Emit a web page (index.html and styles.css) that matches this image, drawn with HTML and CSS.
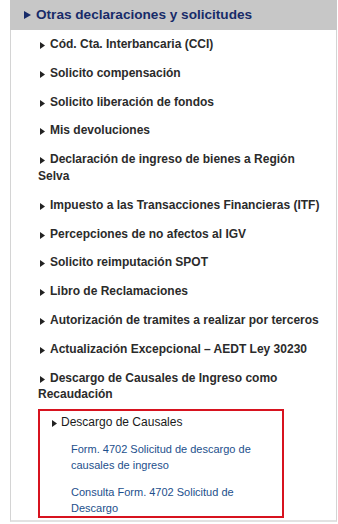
FILE: index.html
```html
<!DOCTYPE html>
<html lang="es">
<head>
<meta charset="utf-8">
<title>Otras declaraciones y solicitudes</title>
<link rel="stylesheet" href="styles.css">
</head>
<body>
<div class="menu">
  <div class="menu-header">
    <svg class="tri-h" width="7" height="8" viewBox="0 0 7 8"><polygon points="0,0 7,4 0,8" /></svg>Otras declaraciones y solicitudes
  </div>
  <ul class="menu-body">
    <li class="item"><svg class="tri" width="5" height="7" viewBox="0 0 5 7"><polygon points="0,0 5,3.5 0,7"/></svg>Cód. Cta. Interbancaria (CCI)</li>
    <li class="item"><svg class="tri" width="5" height="7" viewBox="0 0 5 7"><polygon points="0,0 5,3.5 0,7"/></svg>Solicito compensación</li>
    <li class="item"><svg class="tri" width="5" height="7" viewBox="0 0 5 7"><polygon points="0,0 5,3.5 0,7"/></svg>Solicito liberación de fondos</li>
    <li class="item"><svg class="tri" width="5" height="7" viewBox="0 0 5 7"><polygon points="0,0 5,3.5 0,7"/></svg>Mis devoluciones</li>
    <li class="item"><svg class="tri" width="5" height="7" viewBox="0 0 5 7"><polygon points="0,0 5,3.5 0,7"/></svg>Declaración de ingreso de bienes a Región Selva</li>
    <li class="item"><svg class="tri" width="5" height="7" viewBox="0 0 5 7"><polygon points="0,0 5,3.5 0,7"/></svg>Impuesto a las Transacciones Financieras (ITF)</li>
    <li class="item"><svg class="tri" width="5" height="7" viewBox="0 0 5 7"><polygon points="0,0 5,3.5 0,7"/></svg>Percepciones de no afectos al IGV</li>
    <li class="item"><svg class="tri" width="5" height="7" viewBox="0 0 5 7"><polygon points="0,0 5,3.5 0,7"/></svg>Solicito reimputación SPOT</li>
    <li class="item"><svg class="tri" width="5" height="7" viewBox="0 0 5 7"><polygon points="0,0 5,3.5 0,7"/></svg>Libro de Reclamaciones</li>
    <li class="item"><svg class="tri" width="5" height="7" viewBox="0 0 5 7"><polygon points="0,0 5,3.5 0,7"/></svg>Autorización de tramites a realizar por terceros</li>
    <li class="item"><svg class="tri" width="5" height="7" viewBox="0 0 5 7"><polygon points="0,0 5,3.5 0,7"/></svg>Actualización Excepcional – AEDT Ley 30230</li>
    <li class="item"><svg class="tri" width="5" height="7" viewBox="0 0 5 7"><polygon points="0,0 5,3.5 0,7"/></svg>Descargo de Causales de Ingreso como Recaudación</li>
    <li class="highlight">
      <div class="sub-title"><svg class="tri" width="5" height="7" viewBox="0 0 5 7"><polygon points="0,0 5,3.5 0,7"/></svg>Descargo de Causales</div>
      <ul class="sub-links">
        <li><a href="#">Form. 4702 Solicitud de descargo de causales de ingreso</a></li>
        <li><a href="#">Consulta Form. 4702 Solicitud de Descargo</a></li>
      </ul>
    </li>
  </ul>
</div>
</body>
</html>
```

FILE: styles.css
```css
html, body {
  margin: 0;
  padding: 0;
  background: #ffffff;
}

body {
  font-family: "Liberation Sans", Arial, sans-serif;
}

.menu {
  margin-left: 10px;
  width: 327px;
}

.menu-header {
  height: 30px;
  line-height: 30px;
  background: #c7c7c7;
  padding-left: 14px;
  font-size: 13.6px;
  font-weight: bold;
  color: #172b69;
  display: flex;
  align-items: center;
}

.tri-h {
  fill: #172b69;
  margin-right: 5px;
  flex: none;
}

.menu-body {
  list-style: none;
  margin: 0;
  padding: 0 12px 0 27px;
  border-left: 1px solid #d4d4d4;
  border-right: 1px solid #d4d4d4;
  border-bottom: 2px solid #e2e2e2;
  height: 492px;
  box-sizing: border-box;
}

.item {
  padding: 6px 0;
  font-size: 12px;
  line-height: 16.8px;
  font-weight: bold;
  color: #2b2b2b;
}

.tri {
  fill: #222222;
  margin-left: 2px;
  margin-right: 5px;
  vertical-align: -1px;
}

.highlight {
  border: 2px solid #d7131f;
  margin-right: 40px;
  padding: 3px 0 0 12px;
  box-sizing: border-box;
  height: 109px;
}

.sub-title {
  font-size: 12px;
  line-height: 17px;
  color: #1a1a1a;
}

.sub-title .tri {
  margin-left: 0;
  margin-right: 4px;
}

.sub-links {
  list-style: none;
  margin: 11px 0 0;
  padding: 0 0 0 19px;
}

.sub-links li {
  font-size: 11px;
  line-height: 15.5px;
}

.sub-links li + li {
  margin-top: 12px;
}

.sub-links a {
  color: #1d4f8c;
  text-decoration: none;
}
```
